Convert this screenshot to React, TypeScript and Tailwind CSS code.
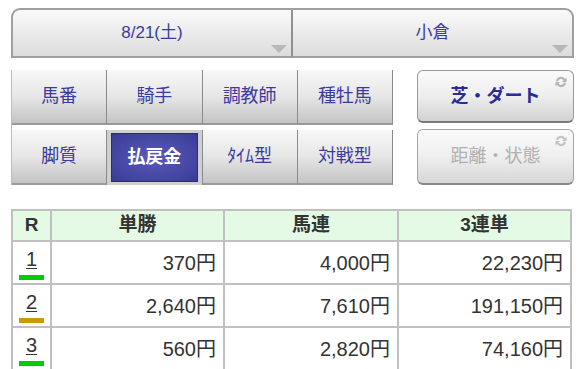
import React from "react";

const jp = { fontFamily: '"Liberation Sans", "Noto Sans CJK JP", sans-serif' };

function Tri() {
  return (
    <svg className="absolute right-[4px] bottom-[3px]" width="16" height="8" viewBox="0 0 16 8">
      <path d="M0 0 L16 0 L8 8 Z" fill="#b8b8b8" />
    </svg>
  );
}

function Swap({ light }: { light?: boolean }) {
  const c = light ? "#c4c4c4" : "#b4b4b4";
  return (
    <svg className="absolute right-[5px] top-[4px]" width="14" height="14" viewBox="0 0 14 14">
      <path d="M2 6 A5 5 0 0 1 11 4 L12.5 2.5 L12.5 7 L8 7 L9.5 5.5 A3 3 0 0 0 4 6.5 Z" fill={c} />
      <path d="M12 8 A5 5 0 0 1 3 10 L1.5 11.5 L1.5 7 L6 7 L4.5 8.5 A3 3 0 0 0 10 7.5 Z" fill={c} />
    </svg>
  );
}

function GridBtn({ label, active }: { label: string; active?: boolean }) {
  if (active) {
    return (
      <div className="h-full bg-[#cfcfcf] p-[3px_4px_3px_4px] border-r border-[#8a8a8a]">
        <div className="h-full flex items-center justify-center text-white font-bold text-[18px] bg-[radial-gradient(ellipse_at_center,#5a5ab8_0%,#3a3a98_100%)] border border-[#2a2a80]">
          {label}
        </div>
      </div>
    );
  }
  return (
    <div className="h-full flex items-center justify-center text-[#3a3aa0] text-[18px] bg-gradient-to-b from-[#f8f8f8] via-[#e6e6e6] to-[#c4c4c4] border-r border-b-2 border-[#8a8a8a] border-b-[#9a9a9a]">
      {label}
    </div>
  );
}

const rows = [
  { r: "1", color: "#00cc00", a: "370円", b: "4,000円", c: "22,230円" },
  { r: "2", color: "#cc9900", a: "2,640円", b: "7,610円", c: "191,150円" },
  { r: "3", color: "#00cc00", a: "560円", b: "2,820円", c: "74,160円" },
];

export default function App() {
  return (
    <div className="w-[585px] h-[369px] bg-white overflow-hidden" style={jp}>
      <div className="flex px-[11px] pt-[8px]">
        <div className="relative w-[281px] h-[50px] flex items-center justify-center text-[17px] text-[#3a3aa0] bg-gradient-to-b from-[#fafafa] to-[#dcdcdc] border-2 border-[#a0a0a0] border-r border-r-[#909090] rounded-tl-[9px]">
          8/21(土)
          <Tri />
        </div>
        <div className="relative w-[282px] h-[50px] flex items-center justify-center text-[17px] text-[#3a3aa0] bg-gradient-to-b from-[#fafafa] to-[#dcdcdc] border-2 border-[#a0a0a0] border-l border-l-[#909090] rounded-tr-[9px]">
          小倉
          <Tri />
        </div>
      </div>

      <div className="flex px-[11px] pt-[12px]">
        <div className="w-[382px] grid grid-cols-4 grid-rows-[55px_55px] gap-y-[5px] border-l border-[#bdbdbd]">
          <GridBtn label="馬番" />
          <GridBtn label="騎手" />
          <GridBtn label="調教師" />
          <GridBtn label="種牡馬" />
          <GridBtn label="脚質" />
          <GridBtn label="払戻金" active />
          <GridBtn label="ﾀｲﾑ型" />
          <GridBtn label="対戦型" />
        </div>
        <div className="ml-[24px] w-[157px] flex flex-col gap-[6px]">
          <div className="relative h-[53px] flex items-center justify-center text-[18px] font-bold text-[#2a2a9a] bg-gradient-to-b from-[#fafafa] via-[#eeeeee] to-[#d2d2d2] border border-[#9a9a9a] border-b-2 border-b-[#7a7a7a] rounded-[6px]">
            芝・ダート
            <Swap />
          </div>
          <div className="relative h-[56px] flex items-center justify-center text-[18px] text-[#b0b0b0] bg-gradient-to-b from-[#fafafa] via-[#efefef] to-[#d6d6d6] border border-[#a5a5a5] border-b-2 border-b-[#8a8a8a] rounded-[6px]">
            距離・状態
            <Swap light />
          </div>
        </div>
      </div>

      <div className="px-[11px] pt-[24px]">
        <table className="w-[559px] border-collapse table-fixed">
          <colgroup>
            <col className="w-[39px]" />
            <col className="w-[173px]" />
            <col className="w-[174px]" />
            <col className="w-[173px]" />
          </colgroup>
          <thead>
            <tr className="h-[31px] bg-[#e4fae4] text-[19px] font-bold text-[#333]">
              <th className="border-2 border-[#c0c0c0]">R</th>
              <th className="border-2 border-[#c0c0c0]">単勝</th>
              <th className="border-2 border-[#c0c0c0]">馬連</th>
              <th className="border-2 border-[#c0c0c0]">3連単</th>
            </tr>
          </thead>
          <tbody>
            {rows.map((row) => (
              <tr key={row.r} className="h-[43px] text-[20px] text-[#333]">
                <td className="border-2 border-[#c0c0c0] p-0">
                  <div className="flex flex-col items-center pt-[3px]">
                    <span className="leading-[22px] underline underline-offset-[2px] decoration-1">{row.r}</span>
                    <span className="mt-[5px] w-[25px] h-[5px]" style={{ backgroundColor: row.color }} />
                  </div>
                </td>
                <td className="border-2 border-[#c0c0c0] text-right pr-[7px]">{row.a}</td>
                <td className="border-2 border-[#c0c0c0] text-right pr-[7px]">{row.b}</td>
                <td className="border-2 border-[#c0c0c0] text-right pr-[7px]">{row.c}</td>
              </tr>
            ))}
          </tbody>
        </table>
      </div>
    </div>
  );
}
